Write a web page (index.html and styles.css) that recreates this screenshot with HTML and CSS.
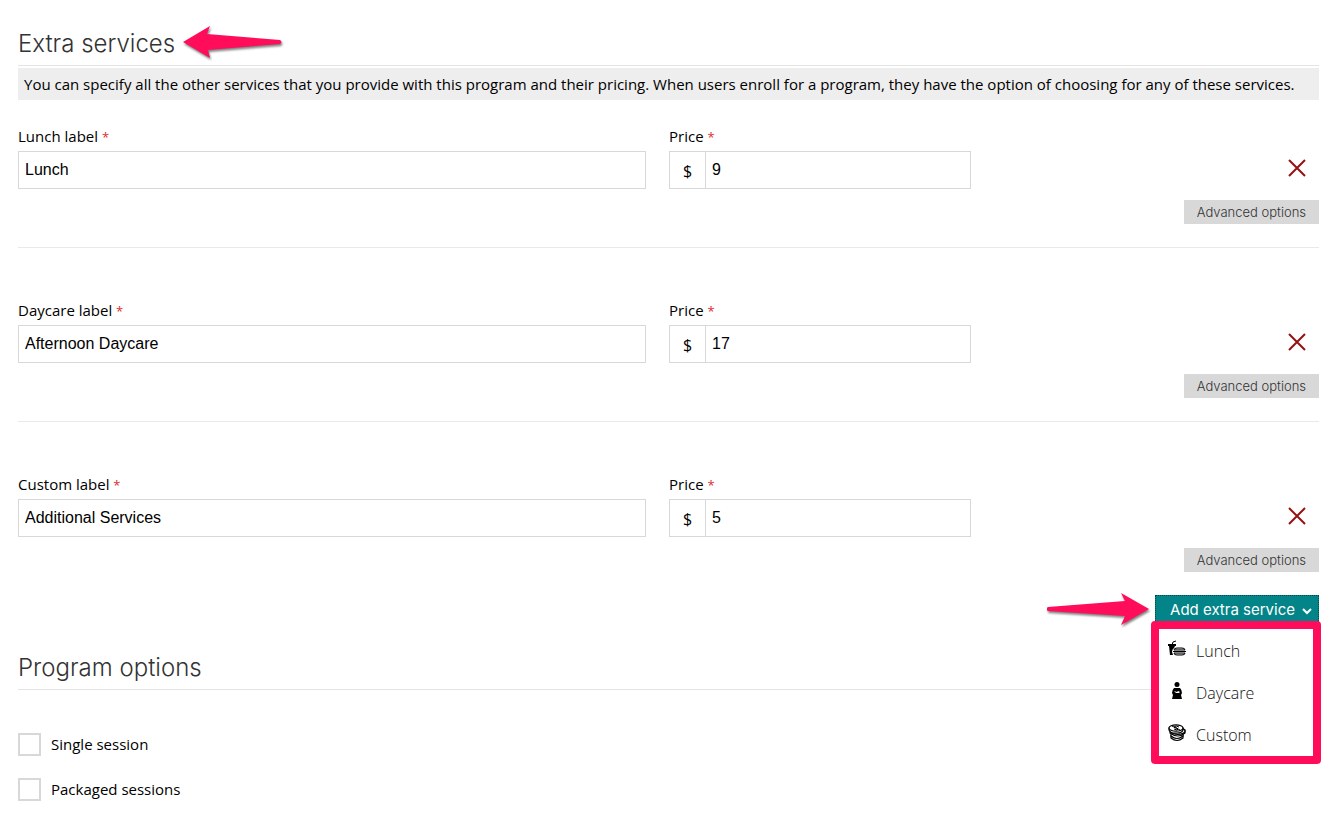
FILE: index.html
```
<!DOCTYPE html>
<html lang="en">

<head>
  <meta charset="UTF-8">
  <meta name="viewport" content="width=device-width, initial-scale=1.0">
  <title>Extra services</title>
  <link rel="stylesheet" href="styles.css">
</head>

<body>
  <form class="program">
    <section>
      <div class="section-title">
        <h2>Extra services</h2>
        <svg class="arrow" width="104" height="36" viewBox="0 0 104 36" aria-hidden="true">
          <path d="M1 17L28 1L25 9L98 15Q101 17 98 19L26 25L28 33Z" />
        </svg>
      </div>
      <p class="notice">You can specify all the other services that you provide with this program and their pricing. When users enroll for a program, they have the option of choosing for any of these services.</p>

      <div class="service">
        <div class="field">
          <label for="lunch-label">Lunch label <span class="required">*</span></label>
          <input type="text" id="lunch-label" value="Lunch">
        </div>
        <div class="field">
          <label for="lunch-price">Price <span class="required">*</span></label>
          <div class="price">
            <span class="currency">$</span>
            <input type="text" id="lunch-price" value="9">
          </div>
        </div>
        <div class="actions">
          <button type="button" class="remove" aria-label="Remove lunch">
            <svg width="18" height="18" viewBox="0 0 18 18"><path d="M1 1L17 17M17 1L1 17" /></svg>
          </button>
          <button type="button" class="advanced">Advanced options</button>
        </div>
      </div>

      <div class="service">
        <div class="field">
          <label for="daycare-label">Daycare label <span class="required">*</span></label>
          <input type="text" id="daycare-label" value="Afternoon Daycare">
        </div>
        <div class="field">
          <label for="daycare-price">Price <span class="required">*</span></label>
          <div class="price">
            <span class="currency">$</span>
            <input type="text" id="daycare-price" value="17">
          </div>
        </div>
        <div class="actions">
          <button type="button" class="remove" aria-label="Remove daycare">
            <svg width="18" height="18" viewBox="0 0 18 18"><path d="M1 1L17 17M17 1L1 17" /></svg>
          </button>
          <button type="button" class="advanced">Advanced options</button>
        </div>
      </div>

      <div class="service">
        <div class="field">
          <label for="custom-label">Custom label <span class="required">*</span></label>
          <input type="text" id="custom-label" value="Additional Services">
        </div>
        <div class="field">
          <label for="custom-price">Price <span class="required">*</span></label>
          <div class="price">
            <span class="currency">$</span>
            <input type="text" id="custom-price" value="5">
          </div>
        </div>
        <div class="actions">
          <button type="button" class="remove" aria-label="Remove custom">
            <svg width="18" height="18" viewBox="0 0 18 18"><path d="M1 1L17 17M17 1L1 17" /></svg>
          </button>
          <button type="button" class="advanced">Advanced options</button>
        </div>
      </div>

      <div class="add-row">
        <svg class="arrow" width="108" height="36" viewBox="0 0 108 36" aria-hidden="true">
          <path d="M102 18L74 2L78 10L1 16Q-2 18 1 20L78 25L74 34Z" />
        </svg>
        <div class="dropdown">
          <button type="button" class="add">
            Add extra service
            <svg width="10" height="7" viewBox="0 0 10 7"><path d="M1 1L5 5L9 1" /></svg>
          </button>
          <!-- dropdown menu -->
          <ul class="menu">
            <li>
              <a href="#">
                <svg width="18" height="18" viewBox="0 0 18 18">
                  <path d="M0 4H8V6H7L6 8Q4 9 4 12L5 15H2L1 6H0Z" />
                  <path d="M4 5L5 2L8 1" fill="none" stroke="#000" />
                  <path d="M6 10Q6 8 9 8H14Q17 8 17 10ZM6 13H17Q17 15 14 15H9Q6 15 6 13Z" fill="#ccc" stroke="#000" />
                  <path d="M5 11H18V12H5Z" />
                </svg>
                Lunch
              </a>
            </li>
            <li>
              <a href="#">
                <svg width="18" height="18" viewBox="0 0 18 18">
                  <circle cx="9" cy="2.5" r="2.5" />
                  <path d="M6 6H12Q14 8 14 11L13 13L14 17H4L5 13L4 11Q4 8 6 6Z" />
                  <path d="M6 9L8 11H11L12 10L10 9L9 10Z" fill="#fff" />
                </svg>
                Daycare
              </a>
            </li>
            <li>
              <a href="#">
                <svg width="18" height="18" viewBox="0 0 18 18" fill="#fff" stroke="#000" stroke-width="1.2">
                  <path d="M3 12V14Q9 19 15 14V12Q9 16 3 12Z" />
                  <path d="M3 9V12Q9 17 15 12V9Z" />
                  <path d="M2 6V9Q10 15 17 9V6Z" />
                  <ellipse cx="10" cy="7" rx="7" ry="3.4" />
                  <path d="M1 4V6Q3 10 9 9Q14 9 15 6V4Z" />
                  <ellipse cx="8" cy="4" rx="7" ry="3.2" />
                  <path d="M11 3Q8 1 6 3Q7 4 9 4Q11 5 9 6L6 5M4 2L12 6" fill="none" stroke-width="1" />
                </svg>
                Custom
              </a>
            </li>
          </ul>
        </div>
      </div>
    </section>

    <section class="options">
      <div class="section-title">
        <h2>Program options</h2>
      </div>
      <label class="check"><input type="checkbox"><span>Single session</span></label>
      <label class="check"><input type="checkbox"><span>Packaged sessions</span></label>
    </section>
  </form>
</body>

</html>
```
FILE: styles.css
```
* {
  box-sizing: border-box;
}

body {
  margin: 0;
  background-color: white;
  color: #000;
  font-family: "Open Sans", "Noto Sans", sans-serif;
  font-size: 15px;
  line-height: 24px;
}

button {
  border: 0;
  cursor: pointer;
}

.program {
  padding: 27px 18px 14px;
}

.section-title {
  display: flex;
  align-items: center;
  gap: 7px;
  height: 39px;
  padding-bottom: 6px;
  border-bottom: 1px solid #e4e4e4;
}

.section-title h2 {
  margin: 0;
  padding-top: 2px;
  color: #333;
  font-family: Inter, sans-serif;
  font-size: 24px;
  font-weight: 300;
  line-height: 32px;
}

.arrow {
  fill: #ff0c5b;
  filter: drop-shadow(1px 2px 1px rgba(0, 0, 0, 0.5));
}

.notice {
  margin: 2px 0 0;
  padding: 4px 6px;
  background-color: #eee;
}

.service {
  display: grid;
  grid-template-columns: 628fr 302fr 325fr;
  gap: 23px;
  padding: 50px 0 23px;
  border-bottom: 1px solid #e9e9e9;
}

.notice + .service {
  padding-top: 24px;
}

.service:nth-last-child(2) {
  border-bottom: 0;
}

.field label {
  display: block;
  margin-bottom: 3px;
}

.required {
  color: #e02b2b;
  font-size: 13px;
  line-height: 1;
}

.field input {
  display: block;
  width: 100%;
  height: 38px;
  padding: 0 6px;
  border: 1px solid #d8d8d8;
  border-radius: 0;
  background-color: white;
  color: #000;
  font-family: "Liberation Sans", Arial, sans-serif;
  font-size: 16px;
}

.price {
  display: flex;
}

.currency {
  flex: none;
  width: 36px;
  padding-top: 7px;
  border: 1px solid #d8d8d8;
  border-right: 0;
  font-size: 16px;
  text-align: center;
}

.actions {
  display: flex;
  flex-direction: column;
  align-items: flex-end;
  gap: 13px;
  padding-top: 25px;
}

.remove {
  display: flex;
  align-items: center;
  height: 38px;
  padding: 0 13px;
  background: none;
}

.remove svg {
  fill: none;
  stroke: #961111;
  stroke-width: 2;
}

.advanced {
  height: 24px;
  padding: 0 13px;
  background-color: #d8d8d8;
  color: #333;
  font-family: Inter, sans-serif;
  font-size: 13px;
  font-weight: 300;
}

.add-row {
  display: flex;
  justify-content: flex-end;
  height: 28px;
}

.add-row .arrow {
  margin-top: -4px;
}

.dropdown {
  position: relative;
}

.add {
  display: flex;
  align-items: center;
  gap: 7px;
  height: 28px;
  padding: 0 6px 0 14px;
  border: 1px dotted #024b4d;
  background-color: #028488;
  color: white;
  font-family: Inter, sans-serif;
  font-size: 15px;
  white-space: nowrap;
}

.add svg {
  margin-top: 4px;
  fill: none;
  stroke: white;
  stroke-width: 2;
}

.menu {
  position: absolute;
  top: 26px;
  left: -4px;
  right: -2px;
  margin: 0;
  padding: 1px 0 0;
  border: 8px solid #ff0c5b;
  border-radius: 4px;
  background-color: white;
  list-style: none;
}

.menu a {
  display: flex;
  align-items: center;
  gap: 10px;
  height: 42px;
  padding-left: 9px;
  color: #111;
  font-size: 16px;
  font-weight: 300;
  text-decoration: none;
}

.menu svg {
  margin-bottom: 4px;
}

.options {
  padding-top: 28px;
}

.check {
  display: flex;
  align-items: center;
  gap: 10px;
  width: fit-content;
  height: 23px;
  margin-top: 22px;
}

.check span {
  padding-bottom: 2px;
}

.section-title + .check {
  margin-top: 43px;
}

.check input {
  appearance: none;
  width: 23px;
  height: 23px;
  margin: 0;
  border: 2px solid #d8d8d8;
  background-color: white;
}
```
